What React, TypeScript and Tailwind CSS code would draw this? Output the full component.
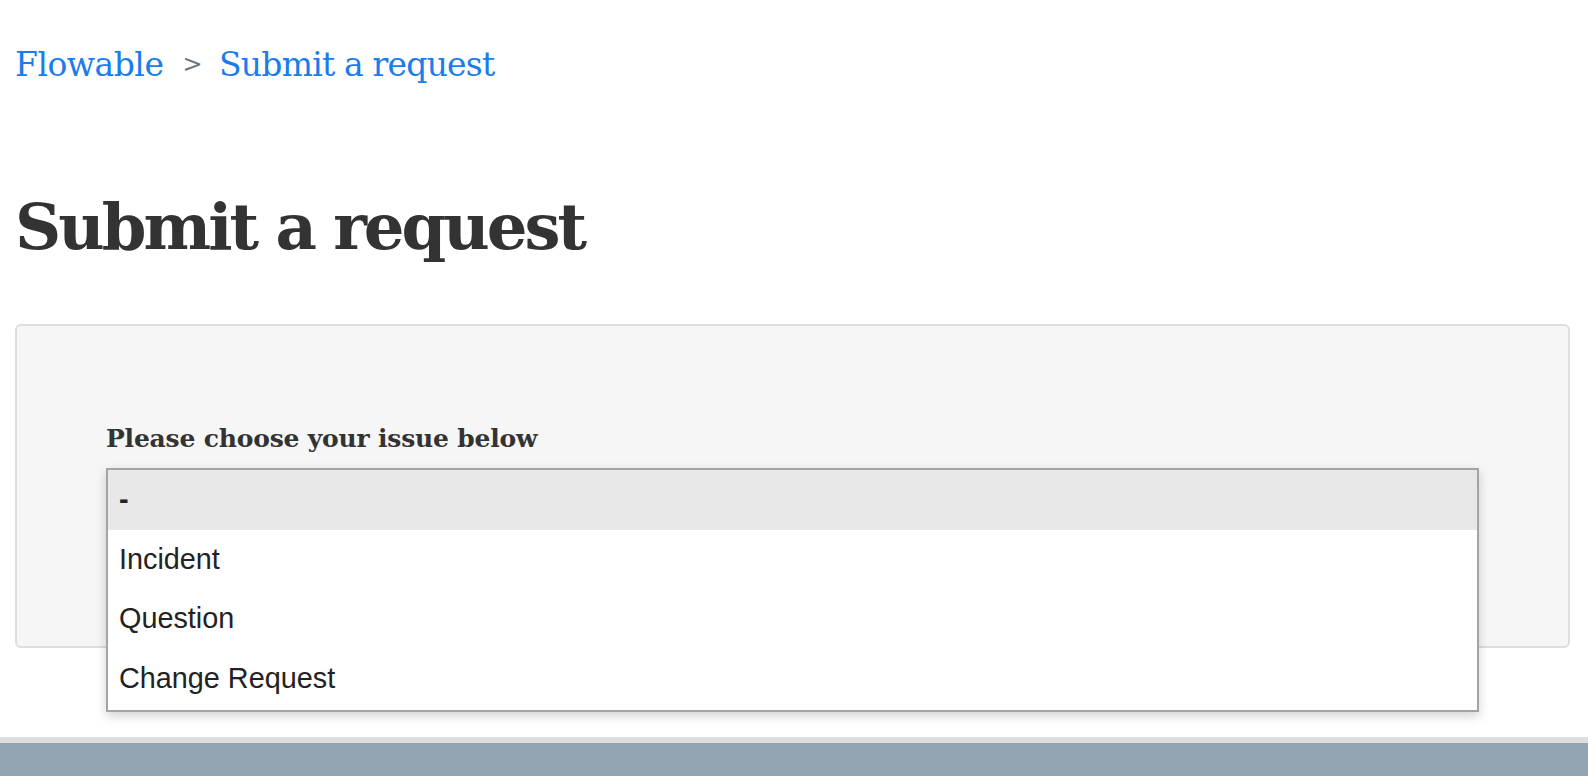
import React from 'react';

const options = ['-', 'Incident', 'Question', 'Change Request'];

const App: React.FC = () => {
  return (
    <div className="min-h-[776px] w-full bg-white flex flex-col font-['DejaVu_Serif',serif] text-[#333]">
      <main className="flex-1 pl-[15px] pr-[18px]">
        {/* Breadcrumbs */}
        <nav className="pt-[40px] flex items-center h-[88px] text-[33px] font-light leading-none tracking-[-0.5px]">
          <a className="text-[#1b7ceb]">Flowable</a>
          <span className="ml-[19px] mr-[17px] text-[#68737d] text-[24px]">&gt;</span>
          <a className="text-[#1b7ceb] tracking-[-0.8px]">Submit a request</a>
        </nav>

        <h1 className="mt-[107px] text-[64px] font-bold leading-none tracking-[-3px] text-[#333]">
          Submit a request
        </h1>

        {/* Request form */}
        <div className="mt-[65px] h-[324px] rounded-[6px] border-2 border-[#dddddd] bg-[#f6f6f6] pt-[100px] px-[89px]">
          <label className="block text-[25px] font-bold leading-none tracking-[-0.2px] text-[#333]">
            Please choose your issue below
          </label>
          <div className="relative mt-[17px]">
            <div className="h-[58px] w-full border border-[#a0a0a0] bg-white" />
            <ul className="absolute left-0 top-0 w-full border-2 border-[#a4a4a4] bg-white pb-[2px] shadow-[0_4px_10px_rgba(0,0,0,0.18)] font-['Liberation_Sans',Arial,sans-serif] text-[28.8px] text-[#222]">
              {options.map((o, i) => (
                <li
                  key={o}
                  className={`h-[59.5px] flex items-center px-[11px] ${i === 0 ? 'bg-[#e8e8e8] font-bold' : ''}`}
                >
                  {o}
                </li>
              ))}
            </ul>
          </div>
        </div>
      </main>

      <footer className="mt-[88px] h-[39px] border-t-[6px] border-[#dedede] bg-[#93a3b0]" />
    </div>
  );
};

export default App;
